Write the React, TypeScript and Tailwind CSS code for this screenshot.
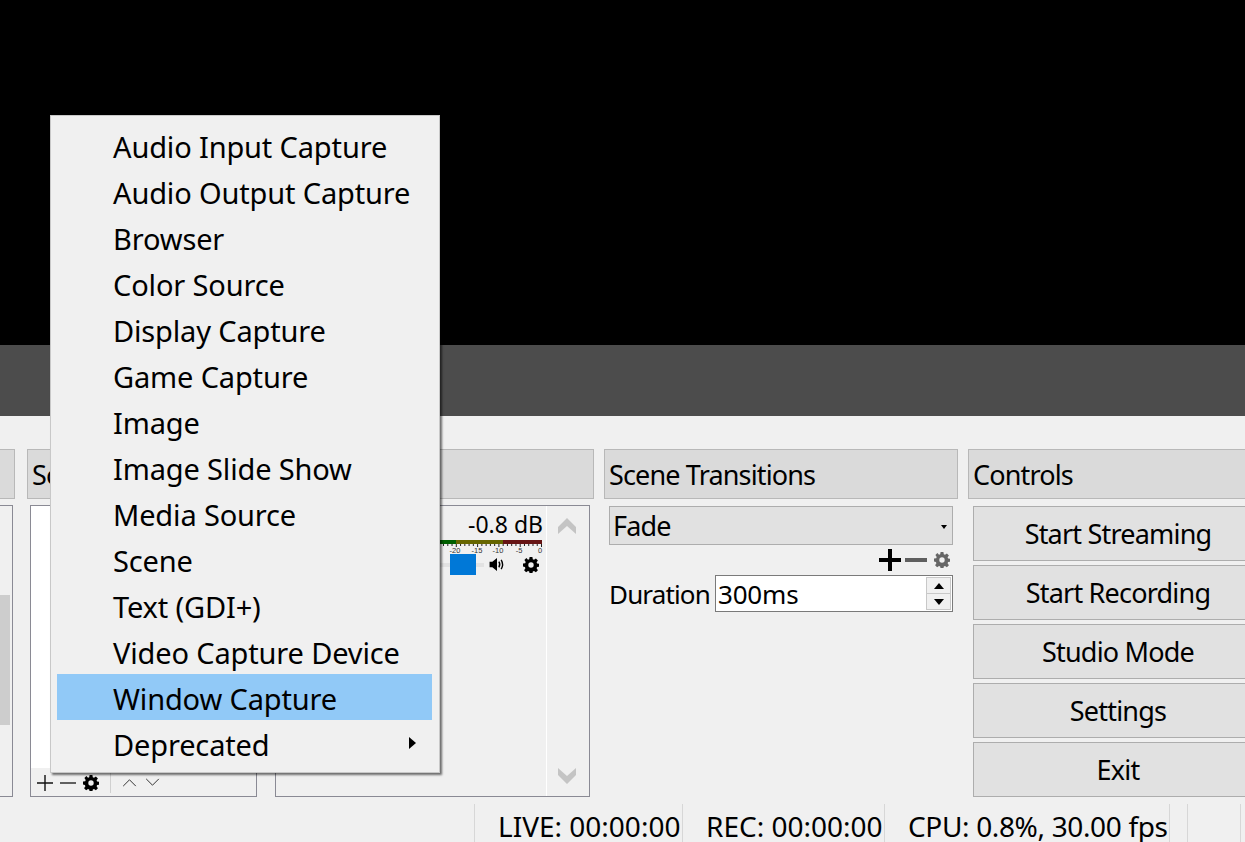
import React from "react";

const font = { fontFamily: '"Noto Sans", "Open Sans", sans-serif' };

const items = [
  "Audio Input Capture",
  "Audio Output Capture",
  "Browser",
  "Color Source",
  "Display Capture",
  "Game Capture",
  "Image",
  "Image Slide Show",
  "Media Source",
  "Scene",
  "Text (GDI+)",
  "Video Capture Device",
  "Window Capture",
  "Deprecated",
];

const ticks = Array.from({ length: 24 }, (_, i) => i);

function Gear({ className, color = "#000" }: { className: string; color?: string }) {
  return (
    <svg viewBox="0 0 16 16" className={className}>
      <path
        fill={color}
        fillRule="evenodd"
        d="M6.6 0h2.8l.4 2.2 1.2.5L12.9 1.4l2 2-1.3 1.9.5 1.2 2.2.4v2.8l-2.2.4-.5 1.2 1.3 1.9-2 2-1.9-1.3-1.2.5-.4 2.2H6.6l-.4-2.2-1.2-.5-1.9 1.3-2-2 1.3-1.9-.5-1.2L0 9.400V6.600l2.200-.4.5-1.200L1.400 3.100l2-2L5 2.700l1.200-.5zM8 5.300a2.700 2.700 0 1 0 0 5.400 2.700 2.700 0 0 0 0-5.400z"
      />
    </svg>
  );
}

function DockTitle({ children }: { children?: React.ReactNode }) {
  return (
    <div className="w-full h-[50px] border border-[#b8b8b8] bg-[#dadada] pl-1 pt-[2px] flex items-center text-[27px] text-black tracking-[-0.85px] overflow-hidden">
      {children}
    </div>
  );
}

function ControlButton({ label }: { label: string }) {
  return (
    <div className="h-[55px] border border-[#adadad] bg-[#e1e1e1] pt-[2px] flex items-center justify-center text-[27px] text-black tracking-[-0.8px]">
      {label}
    </div>
  );
}

function Stat({ label, className }: { label: string; className: string }) {
  return (
    <div className={`h-full border-r border-[#d7d7d7] flex items-center pt-[5px] pl-[23px] leading-[30px] whitespace-nowrap ${className}`}>
      {label}
    </div>
  );
}

export default function App() {
  return (
    <div className="relative w-[1245px] h-[842px] overflow-hidden bg-[#f0f0f0] flex flex-col" style={font}>
      <div className="h-[345px] bg-black shrink-0" />
      <div className="h-[71px] bg-[#4c4c4c] shrink-0" />

      <div className="flex flex-col pt-[33px] h-[381px] shrink-0">
        <div className="flex gap-[12px] ml-[-200px] w-[1700px] h-[348px]">
          {/* Scenes */}
          <div className="w-[215px] shrink-0 flex flex-col">
            <DockTitle />
            <div className="mt-[6px] h-[293px] w-[213px] border border-[#8a8a94] flex justify-end">
              <div className="w-[10px] flex flex-col pt-[89px] mr-[2px]">
                <div className="h-[130px] bg-[#cdcdcd]" />
              </div>
            </div>
          </div>

          {/* Sources */}
          <div className="w-[230px] shrink-0 flex flex-col">
            <DockTitle>So</DockTitle>
            <div className="mt-[6px] ml-[3px] h-[293px] w-[227px] border border-[#8a8a94] flex flex-col">
              <div className="h-[262px] bg-white" />
              <div className="flex-1 flex items-center pl-[6px] pt-[2px]">
                <svg viewBox="0 0 16 16" className="w-[16px] h-[16px]"><path d="M8 0v16M0 8h16" stroke="#111" strokeWidth="1.4" /></svg>
                <svg viewBox="0 0 16 16" className="w-[16px] h-[16px] ml-[7px]"><path d="M0 8h16" stroke="#222" strokeWidth="1.4" /></svg>
                <Gear className="w-[16px] h-[16px] ml-[7px]" />
                <div className="w-px h-[20px] bg-[#d0d0d0] ml-[11px]" />
                <svg viewBox="0 0 16 10" className="w-[15px] h-[9px] ml-[11px]"><path d="M1 9l7-7 7 7" stroke="#333" strokeWidth="1.1" fill="none" /></svg>
                <svg viewBox="0 0 16 10" className="w-[15px] h-[9px] ml-[8px]"><path d="M1 1l7 7 7-7" stroke="#333" strokeWidth="1.1" fill="none" /></svg>
              </div>
            </div>
          </div>

          {/* Mixer */}
          <div className="w-[325px] shrink-0 flex flex-col">
            <DockTitle />
            <div className="mt-[6px] ml-[6px] w-[315px] h-[293px] border border-[#8a8a94] flex">
              <div className="w-[271px] border-r border-white flex flex-col items-end pr-[3px]">
                <div className="h-[31px] mt-[3px] flex items-center text-[23px] leading-none">-0.8 dB</div>
                <svg viewBox="0 0 145 14" className="w-[145px] h-[14px] shrink-0">
                  <rect x="0" y="0" width="58" height="4" fill="#006000" />
                  <rect x="58" y="0" width="47" height="4" fill="#666600" />
                  <rect x="105" y="0" width="39" height="4" fill="#661414" />
                  {ticks.map((i) => (
                    <rect key={i} x={143 - i * 4.26} y="4" width="1" height={i % 5 === 0 ? 3 : 2} fill="#222" />
                  ))}
                  <g fontFamily="'Liberation Sans', sans-serif" fontSize="7.5" fill="#333" textAnchor="middle">
                    <text x="57" y="13">-20</text>
                    <text x="79" y="13">-15</text>
                    <text x="100" y="13">-10</text>
                    <text x="121" y="13">-5</text>
                    <text x="142" y="13">0</text>
                  </g>
                </svg>
                <div className="flex items-center h-[22px] mr-[4px]">
                  <div className="w-[10px] h-[4px] bg-[#e2e2e2]" />
                  <div className="w-[26px] h-[21px] bg-[#0078d7]" />
                  <div className="w-[8px] h-[4px] bg-[#e2e2e2]" />
                  <svg viewBox="0 0 16 14" className="w-[16px] h-[13px] ml-[5px]">
                    <path d="M0 4h3l5-4v14l-5-4H0z" fill="#000" />
                    <path d="M10 4q2 3 0 6M12.500 2q3 5 0 10" stroke="#000" strokeWidth="1.500" fill="none" />
                  </svg>
                  <Gear className="w-[16px] h-[16px] ml-[18px]" />
                </div>
              </div>
              <div className="flex-1 flex flex-col justify-between items-center py-[12px] pr-[2px]">
                <svg viewBox="0 0 18 16" className="w-[18px] h-[16px]"><path d="M9 0l9 9v7l-9-8-9 8V9z" fill="#c4c4c4" /></svg>
                <svg viewBox="0 0 18 16" className="w-[18px] h-[16px]"><path d="M9 16l9-9V0L9 8 0 0v7z" fill="#c4c4c4" /></svg>
              </div>
            </div>
          </div>

          {/* Scene Transitions */}
          <div className="w-[354px] shrink-0 -ml-[2px] flex flex-col">
            <DockTitle>Scene Transitions</DockTitle>
            <div className="mt-[7px] mx-[5px] h-[39px] border border-[#adadad] bg-[#e1e1e1] flex items-center justify-between pl-[3px] pr-[5px] pt-[2px] text-[27px] tracking-[-0.8px]">
              <span>Fade</span>
              <span className="w-0 h-0 border-l-[3.500px] border-r-[3.500px] border-t-[4px] border-l-transparent border-r-transparent border-t-black" />
            </div>
            <div className="h-[30px] mr-[8px] flex items-center justify-end">
              <svg viewBox="0 0 22 22" className="w-[22px] h-[22px]"><path d="M11 0v22M0 11h22" stroke="#000" strokeWidth="4" /></svg>
              <svg viewBox="0 0 22 22" className="w-[22px] h-[22px] ml-[4px]"><path d="M0 11h22" stroke="#5f5f5f" strokeWidth="4" /></svg>
              <Gear className="w-[16px] h-[16px] ml-[7px]" color="#666" />
            </div>
            <div className="flex items-center mx-[5px] h-[37px]">
              <span className="text-[26px] tracking-[-0.85px] w-[106px] pt-[2px]">Duration</span>
              <div className="flex-1 h-[37px] border border-[#7a7a7a] bg-white flex justify-between pl-[2px] text-[26px] tracking-[-0.2px]">
                <span className="self-center pt-[2px]">300ms</span>
                <div className="w-[25px] h-[33px] mt-[1px] mr-[1px] flex flex-col bg-[#f0f0f0] border border-[#c8c8c8]">
                  <div className="flex-1 flex items-center justify-center border-b border-[#c8c8c8]">
                    <span className="w-0 h-0 border-l-[5.500px] border-r-[5.500px] border-b-[6px] border-l-transparent border-r-transparent border-b-black" />
                  </div>
                  <div className="flex-1 flex items-center justify-center">
                    <span className="w-0 h-0 border-l-[5.500px] border-r-[5.500px] border-t-[6px] border-l-transparent border-r-transparent border-t-black" />
                  </div>
                </div>
              </div>
            </div>
          </div>

          {/* Controls */}
          <div className="w-[300px] shrink-0 -ml-[2px] flex flex-col">
            <DockTitle>Controls</DockTitle>
            <div className="mt-[7px] ml-[5px] w-[290px] flex flex-col gap-[4px]">
              <ControlButton label="Start Streaming" />
              <ControlButton label="Start Recording" />
              <ControlButton label="Studio Mode" />
              <ControlButton label="Settings" />
              <ControlButton label="Exit" />
            </div>
          </div>
        </div>
      </div>

      {/* Status bar */}
      <div className="flex-1 min-h-0 flex pl-[474px] text-[28px] text-black pt-[7px]">
        <div className="h-full w-px bg-[#d7d7d7]" />
        <Stat label="LIVE: 00:00:00" className="w-[208px]" />
        <Stat label="REC: 00:00:00" className="w-[202px]" />
        <Stat label="CPU: 0.8%, 30.00 fps" className="w-[285px] tracking-[-0.35px]" />
        <div className="h-full w-[18px] border-r border-[#d7d7d7]" />
        <div className="h-full w-[53px] border-r border-[#d7d7d7]" />
      </div>

      {/* Context menu */}
      <div className="absolute left-[50px] top-[115px] w-[390px] h-[658px] bg-[#f0f0f0] border border-[#c8c8c8] shadow-[2px_2px_2px_rgba(0,0,0,0.55)] pl-[6px] pr-[7px] pt-[6px]">
        <div className="flex flex-col">
          {items.map((t) => (
            <div
              key={t}
              className={`h-[46px] pl-[56px] pt-[4px] flex items-center justify-between pr-[16px] text-[29px] text-black tracking-[-0.15px] whitespace-nowrap ${t === "Window Capture" ? "bg-[#91c9f7]" : ""}`}
            >
              <span>{t}</span>
              {t === "Deprecated" && (
                <span className="w-0 h-0 mb-[4px] border-t-[6px] border-b-[6px] border-l-[7px] border-t-transparent border-b-transparent border-l-black" />
              )}
            </div>
          ))}
        </div>
      </div>
    </div>
  );
}
